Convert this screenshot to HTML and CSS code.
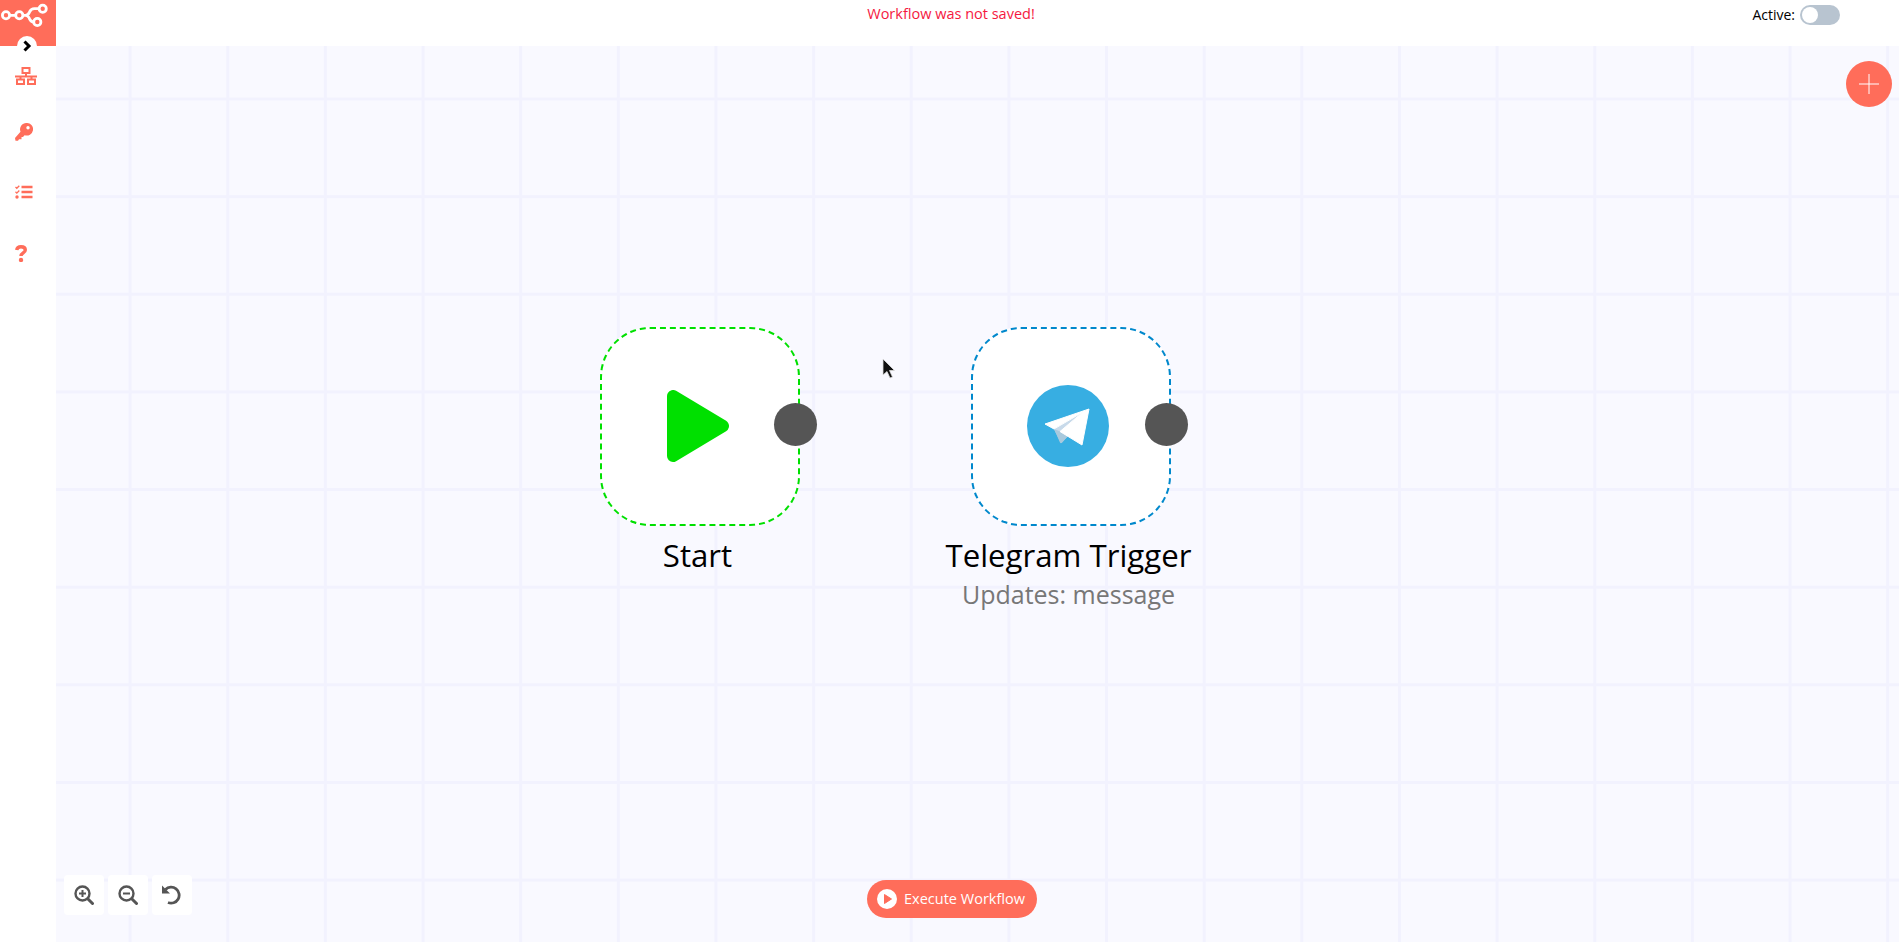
FILE: index.html
```html
<!DOCTYPE html>
<html lang="en">
<head>
  <meta charset="UTF-8">
  <title>n8n.io - Workflow Automation</title>
  <link rel="stylesheet" href="styles.css">
</head>
<body>

<header class="topbar">
  <div class="topbar-left">
    <div class="logo">
      <svg width="48" height="28" viewBox="0 0 48 28" fill="none" stroke="#fff" stroke-width="2.8">
        <circle cx="6" cy="15.300" r="3.600"/>
        <circle cx="19.300" cy="15.300" r="3.600"/>
        <circle cx="42.700" cy="8.700" r="3.600"/>
        <circle cx="37.300" cy="22" r="3.600"/>
        <path d="M9.600 15.300h6.100M22.900 15.300h2.600c3 0 3.300-1.800 4.300-3.800 1-2 2-2.800 4.500-2.800h5M25.500 15.300c3 0 3 1.500 4 3.500 1 2 2 3.200 4.200 3.200"/>
      </svg>
    </div>
  </div>
  <div class="save-message">Workflow was not saved!</div>
  <div class="topbar-right">
    <span>Active:</span>
    <span class="toggle"><span class="toggle-knob"></span></span>
  </div>
</header>

<div class="workspace">
  <nav class="sidebar">
    <span class="expand">
      <svg width="10" height="12" viewBox="0 0 10 12" fill="none" stroke="#000" stroke-width="3"><path d="M2.500 1.500 7 6l-4.500 4.500"/></svg>
    </span>
    <a class="nav-item nav-item-workflows" href="#">
      <svg width="22" height="18" viewBox="0 0 22 18" fill="none" stroke="#ff6d5a" stroke-width="2">
        <rect x="7.500" y="1" width="7" height="5"/>
        <path d="M11 6v3.500M0 9.500h22M5.500 9.500V12M16.500 9.500V12"/>
        <rect x="2" y="12.500" width="7" height="4.500"/>
        <rect x="13" y="12.500" width="7" height="4.500"/>
      </svg>
    </a>
    <a class="nav-item nav-item-credentials" href="#">
      <svg width="18" height="18" viewBox="0 0 18 18">
        <path fill="#ff6d5a" fill-rule="evenodd" d="M11.500 0a6.300 6.300 0 1 1-1.900 12.200L8 14H6.500V16.200H4l-1 1.500H.5L0 15l5.500-6.300A6.300 6.300 0 0 1 11.500 0Zm1.500 3a1.700 1.700 0 1 0 0 3.400A1.700 1.700 0 0 0 13 3Z"/>
      </svg>
    </a>
    <a class="nav-item" href="#">
      <svg width="18" height="14" viewBox="0 0 18 14" fill="none" stroke="#ff6d5a">
        <path stroke-width="1.300" d="M.5 2 1.800 3.300 4.300.7M.5 6.800l1.300 1.300 2.500-2.600"/>
        <circle cx="2" cy="12" r="1.700" fill="#ff6d5a" stroke="none"/>
        <path stroke-width="2.300" d="M6.500 2H17.500M6.500 7H17.500M6.500 12H17.500"/>
      </svg>
    </a>
    <a class="nav-item nav-item-help" href="#">
      <svg width="12" height="17" viewBox="0 0 12 17" fill="none" stroke="#ff6d5a" stroke-width="3.400">
        <path d="M1.700 5C2 2.700 3.400 1.700 6 1.700c2.700 0 4.300 1.300 4.300 3.300 0 3-4.300 2.800-4.300 6"/>
        <circle cx="6" cy="15" r="2.200" fill="#ff6d5a" stroke="none"/>
      </svg>
    </a>
  </nav>

  <main class="canvas">
    <div class="node node-start">
      <div class="node-box node-box-start">
        <svg width="62" height="72" viewBox="0 0 62 72">
          <path fill="#00e000" stroke="#00e000" stroke-width="12" stroke-linejoin="round" d="M6 6v60l50-30z"/>
        </svg>
        <span class="output-dot"></span>
      </div>
      <div class="node-name">Start</div>
    </div>

    <div class="node node-telegram">
      <div class="node-box node-box-telegram">
        <svg class="telegram-icon" width="82" height="82" viewBox="0 0 82 82">
          <circle cx="41" cy="41" r="41" fill="#37aee2"/>
          <path fill="#c8daea" d="M27 44 34 58 41 51 58 25z"/>
          <path fill="#a9c9dd" d="M27 44 33 57.500c.5 1 1.300.8 2 .2L41 51 32 46z"/>
          <path fill="#fff" stroke="#fff" stroke-linejoin="round" d="M18 39 62 24 55 60 33 46.500 56 27 27 44z"/>
        </svg>
        <span class="output-dot"></span>
      </div>
      <div class="node-name">Telegram Trigger</div>
      <div class="node-subtitle">Updates: message</div>
    </div>

    <svg class="cursor" width="14" height="22" viewBox="0 0 14 22">
      <path fill="#111" stroke="#ddd" stroke-width=".8" d="M1 1v16l4-3.500 3 6.500 2.500-1-3-6.500h5z"/>
    </svg>

    <div class="zoom-buttons">
      <button class="zoom-button">
        <svg width="20" height="20" viewBox="0 0 20 20" fill="none" stroke="#555" stroke-width="2.400">
          <circle cx="8.500" cy="8.500" r="7"/>
          <path stroke-width="3" stroke-linecap="round" d="m14 14 4.500 4.500"/>
          <path stroke-width="2" d="M8.500 5v7M5 8.500h7"/>
        </svg>
      </button>
      <button class="zoom-button">
        <svg width="20" height="20" viewBox="0 0 20 20" fill="none" stroke="#555" stroke-width="2.400">
          <circle cx="8.500" cy="8.500" r="7"/>
          <path stroke-width="3" stroke-linecap="round" d="m14 14 4.500 4.500"/>
          <path stroke-width="2" d="M5 8.500h7"/>
        </svg>
      </button>
      <button class="zoom-button">
        <svg width="20" height="20" viewBox="0 0 20 20" fill="none" stroke="#555" stroke-width="2.800">
          <path d="M3.500 4.500A8 8 0 1 1 6 17.500"/>
          <path fill="#555" stroke="none" d="M0 .5 8 8.500H0z"/>
        </svg>
      </button>
    </div>

    <button class="execute-button">
      <svg width="20" height="20" viewBox="0 0 20 20">
        <circle cx="10" cy="10" r="10" fill="#fff"/>
        <path fill="#ff6d5a" stroke="#ff6d5a" stroke-linejoin="round" d="M7.500 5.500v9l7-4.500z"/>
      </svg>
      <span class="execute-label">Execute Workflow</span>
    </button>

    <button class="add-button">
      <svg width="20" height="20" viewBox="0 0 20 20" stroke="#fff" stroke-width="1"><path d="M10 0v20M0 10h20"/></svg>
    </button>
  </main>
</div>

</body>
</html>
```

FILE: styles.css
```css
html, body {
  height: 100%;
}
body {
  margin: 0;
  display: flex;
  flex-direction: column;
  overflow: hidden;
  font-family: "Open Sans", sans-serif;
  color: #000;
  background: #fff;
}
button {
  font-family: inherit;
  border: none;
  padding: 0;
  cursor: pointer;
}

/* top bar */
.topbar {
  flex: 0 0 46px;
  display: grid;
  grid-template-columns: 1fr auto 1fr;
  align-items: start;
}
.logo {
  width: 56px;
  height: 46px;
  background: #ff6d5a;
  display: flex;
  justify-content: flex-start;
}
.save-message {
  margin-left: 3px;
  padding-top: 4px;
  font-size: 14.500px;
  line-height: 20px;
  color: #f5183f;
}
.topbar-right {
  display: flex;
  justify-content: flex-end;
  align-items: center;
  gap: 5px;
  padding: 5px 59px 0 0;
  font-size: 14px;
  line-height: 20px;
}
.toggle {
  width: 40px;
  height: 20px;
  border-radius: 10px;
  background: #b8c4d0;
  box-sizing: border-box;
  padding: 2px;
}
.toggle-knob {
  display: block;
  width: 16px;
  height: 16px;
  border-radius: 50%;
  background: #fff;
}

/* sidebar */
.workspace {
  flex: 1;
  display: flex;
  min-height: 0;
}
.sidebar {
  position: relative;
  flex: 0 0 56px;
  display: flex;
  flex-direction: column;
  background: #fff;
}
.expand {
  position: absolute;
  top: -10px;
  left: 17px;
  width: 20px;
  height: 20px;
  border-radius: 50%;
  background: #fff;
  display: flex;
  align-items: center;
  justify-content: center;
}
.nav-item {
  height: 40px;
  margin-top: 20px;
  display: flex;
  align-items: center;
  padding-left: 15px;
}
.nav-item-workflows {
  margin-top: 10px;
}
.nav-item-credentials {
  margin-top: 16px;
}
.nav-item-help {
  margin-top: 21px;
}

/* canvas */
.canvas {
  position: relative;
  flex: 1;
  overflow: hidden;
  background-color: #f9f9ff;
  background-image:
    linear-gradient(to right, #f2f2fe 3px, transparent 3px),
    linear-gradient(to bottom, #f2f2fe 3px, transparent 3px);
  background-size: 97.650px 97.650px;
  background-position: -25px 51.500px;
}
.node {
  position: absolute;
  top: 281px;
  width: 200px;
  display: flex;
  flex-direction: column;
  align-items: center;
}
.node-start {
  left: 544px;
}
.node-telegram {
  left: 915px;
}
.node-box {
  position: relative;
  width: 200px;
  height: 199px;
  box-sizing: border-box;
  padding: 0 5px 2px 0;
  background: #fff;
  border-radius: 50px;
  display: flex;
  align-items: center;
  justify-content: center;
}
.node-box-start {
  border: 2px dashed #00e000;
}
.node-box-telegram {
  border: 2px dashed #0088cc;
}
.telegram-icon {
  margin-left: -1px;
}
.output-dot {
  position: absolute;
  top: 74px;
  right: -19px;
  width: 43px;
  height: 43px;
  border-radius: 50%;
  background: #555;
}
.node-name {
  margin-top: 9px;
  margin-right: 5px;
  font-size: 31.200px;
  line-height: 40px;
  white-space: nowrap;
}
.node-subtitle {
  margin-top: 4px;
  margin-right: 5px;
  font-size: 25px;
  line-height: 30px;
  color: #777;
  white-space: nowrap;
}

.cursor {
  position: absolute;
  top: 312px;
  left: 826px;
}

/* floating controls */
.zoom-buttons {
  position: absolute;
  left: 8px;
  bottom: 27px;
  display: flex;
  gap: 4px;
}
.zoom-button {
  width: 40px;
  height: 40px;
  border-radius: 4px;
  background: #fff;
  display: flex;
  align-items: center;
  justify-content: center;
}
.execute-button {
  position: absolute;
  left: 811px;
  bottom: 24px;
  width: 170px;
  height: 38px;
  box-sizing: border-box;
  padding-right: 2px;
  border-radius: 19px;
  background: #ff6d5a;
  color: #fff;
  font-size: 14.500px;
  font-weight: 500;
  display: flex;
  align-items: center;
  justify-content: center;
  gap: 7px;
}
.execute-label {
  position: relative;
  top: -1px;
}
.add-button {
  position: absolute;
  top: 15px;
  right: 7px;
  width: 46px;
  height: 46px;
  border-radius: 50%;
  background: #ff6d5a;
  display: flex;
  align-items: center;
  justify-content: center;
}
```
